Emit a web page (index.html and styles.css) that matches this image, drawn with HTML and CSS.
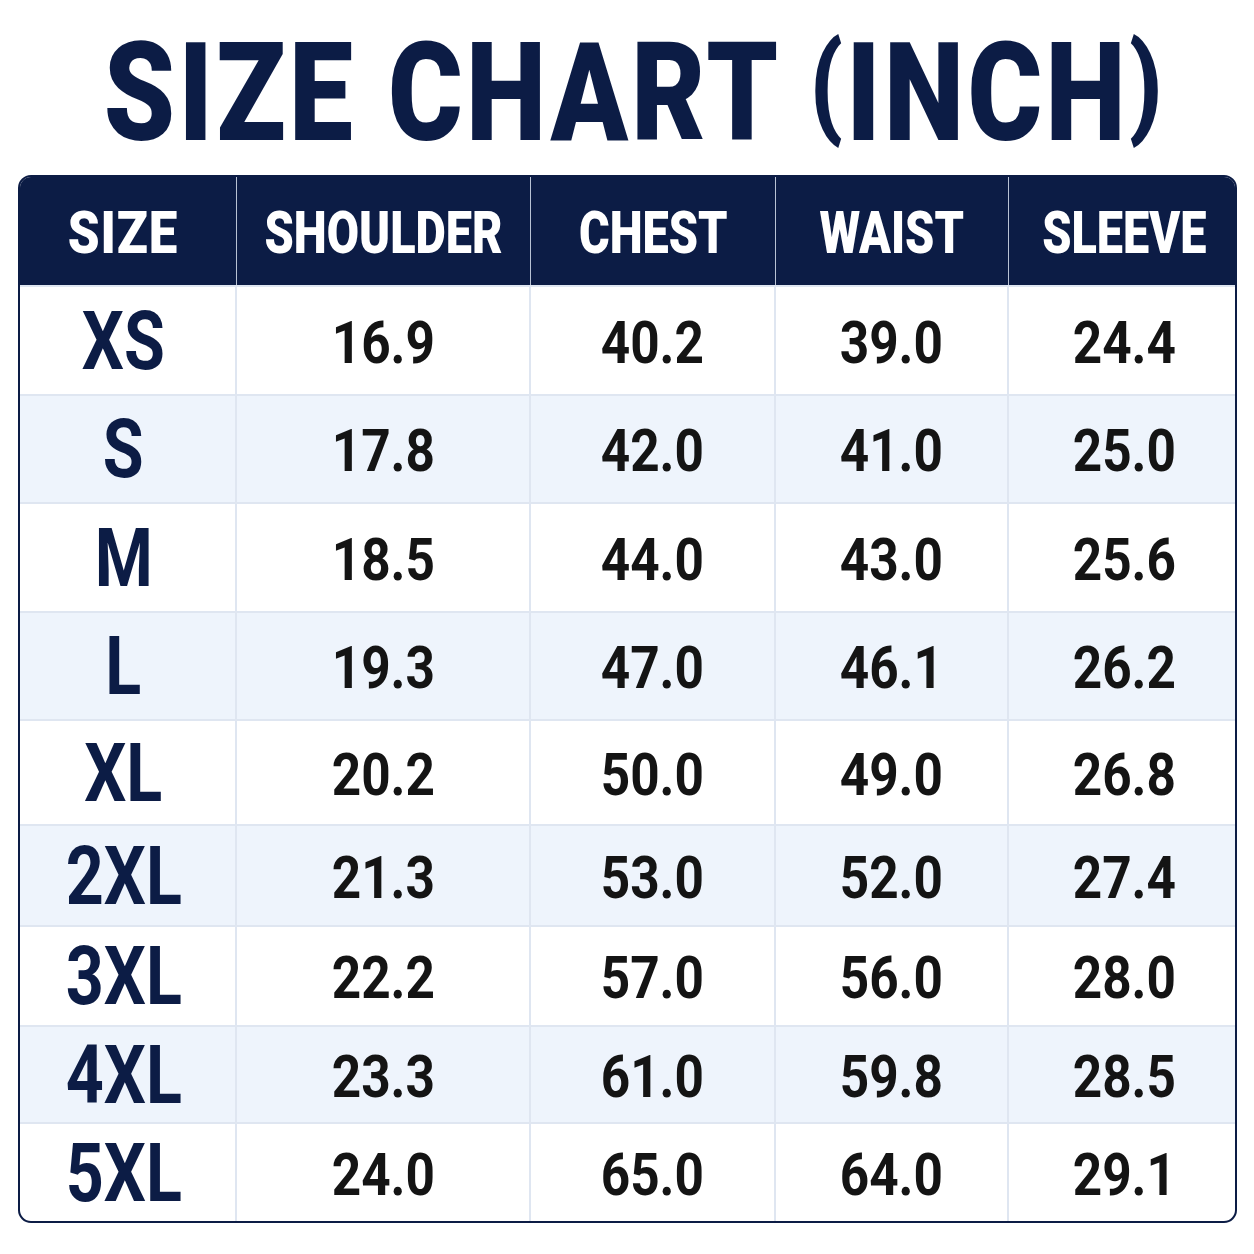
FILE: index.html
```html
<!DOCTYPE html>
<html lang="en">
<head>
<meta charset="utf-8">
<title>Size Chart (Inch)</title>
<link rel="stylesheet" href="styles.css">
</head>
<body>
<main class="page">
  <h1 class="title"><span class="t">SIZE CHART <span class="paren">(</span>INCH<span class="paren">)</span></span></h1>
  <div class="chart">
    <div class="cell head first"><span class="t">SIZE</span></div>
    <div class="cell head"><span class="t">SHOULDER</span></div>
    <div class="cell head"><span class="t">CHEST</span></div>
    <div class="cell head"><span class="t">WAIST</span></div>
    <div class="cell head last"><span class="t">SLEEVE</span></div>

    <div class="cell size"><span class="t">XS</span></div><div class="cell num"><span class="t">16.9</span></div><div class="cell num"><span class="t">40.2</span></div><div class="cell num"><span class="t">39.0</span></div><div class="cell num last"><span class="t">24.4</span></div>
    <div class="cell size alt"><span class="t">S</span></div><div class="cell num alt"><span class="t">17.8</span></div><div class="cell num alt"><span class="t">42.0</span></div><div class="cell num alt"><span class="t">41.0</span></div><div class="cell num alt last"><span class="t">25.0</span></div>
    <div class="cell size"><span class="t">M</span></div><div class="cell num"><span class="t">18.5</span></div><div class="cell num"><span class="t">44.0</span></div><div class="cell num"><span class="t">43.0</span></div><div class="cell num last"><span class="t">25.6</span></div>
    <div class="cell size alt"><span class="t">L</span></div><div class="cell num alt"><span class="t">19.3</span></div><div class="cell num alt"><span class="t">47.0</span></div><div class="cell num alt"><span class="t">46.1</span></div><div class="cell num alt last"><span class="t">26.2</span></div>
    <div class="cell size"><span class="t">XL</span></div><div class="cell num"><span class="t">20.2</span></div><div class="cell num"><span class="t">50.0</span></div><div class="cell num"><span class="t">49.0</span></div><div class="cell num last"><span class="t">26.8</span></div>
    <div class="cell size alt"><span class="t">2XL</span></div><div class="cell num alt"><span class="t">21.3</span></div><div class="cell num alt"><span class="t">53.0</span></div><div class="cell num alt"><span class="t">52.0</span></div><div class="cell num alt last"><span class="t">27.4</span></div>
    <div class="cell size"><span class="t">3XL</span></div><div class="cell num"><span class="t">22.2</span></div><div class="cell num"><span class="t">57.0</span></div><div class="cell num"><span class="t">56.0</span></div><div class="cell num last"><span class="t">28.0</span></div>
    <div class="cell size alt"><span class="t">4XL</span></div><div class="cell num alt"><span class="t">23.3</span></div><div class="cell num alt"><span class="t">61.0</span></div><div class="cell num alt"><span class="t">59.8</span></div><div class="cell num alt last"><span class="t">28.5</span></div>
    <div class="cell size"><span class="t">5XL</span></div><div class="cell num"><span class="t">24.0</span></div><div class="cell num"><span class="t">65.0</span></div><div class="cell num"><span class="t">64.0</span></div><div class="cell num last"><span class="t">29.1</span></div>
  </div>
</main>
</body>
</html>
```

FILE: styles.css
```css
* { box-sizing: border-box; }

html, body {
  margin: 0;
  padding: 0;
  background: #ffffff;
}

body {
  font-family: Roboto, "Liberation Sans", sans-serif;
  font-weight: 700;
}

.page {
  width: 1254px;
  padding: 24px 17px 0 18px;
}

.t {
  display: inline-block;
  white-space: nowrap;
  transform-origin: center center;
}

.title {
  margin: 0 0 14px 0;
  height: 137px;
  display: flex;
  justify-content: center;
  font-size: 138px;
  line-height: 138px;
  font-weight: 900;
  color: #0c1c45;
  padding-left: 14px;
}

.title .t {
  transform: scaleX(0.826);
  letter-spacing: 4px;
}

.title .paren {
  font-size: 114px;
  line-height: 0;
  vertical-align: 17px;
}

.chart {
  width: 1219px;
  display: grid;
  grid-template-columns: 217px 294px 245px 233px 230px;
  grid-template-rows: 108px 109px 108px 109px 108px 105px 101px 100px 97px 99px;
  border: 2px solid #0c1c45;
  border-radius: 13px;
  overflow: hidden;
  background: #ffffff;
}

.cell {
  display: flex;
  align-items: center;
  justify-content: center;
  border-right: 2px solid #dfe6f1;
  border-top: 2px solid #dfe6f1;
}

.cell.last { border-right: none; }

.head {
  background: #0c1c45;
  color: #ffffff;
  font-size: 60px;
  font-weight: 900;
  border-top: none;
  border-right: 1px solid #b9c2d4;
  padding-top: 2px;
}

.head .t { transform: scaleX(0.78); }

.head.first { padding-right: 10px; }

.head.first .t { transform: scaleX(0.85); letter-spacing: 1px; }

.head.last { border-right: none; }

.size {
  color: #0c1c45;
  font-size: 82px;
  padding-top: 0;
  padding-right: 8px;
}

.size .t { transform: scaleX(0.81); }

.num {
  color: #141414;
  font-size: 59px;
  padding-top: 3px;
}

.num .t { transform: scaleX(0.87); }

.alt { background: #eef4fc; }
```
